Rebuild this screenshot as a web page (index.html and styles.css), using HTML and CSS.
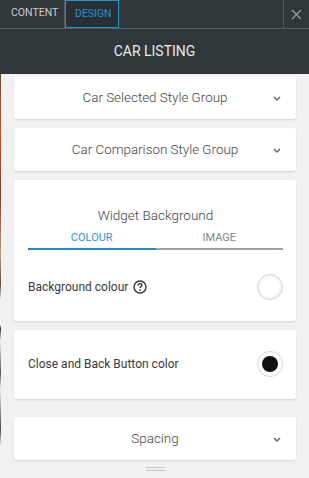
FILE: index.html
```html
<!DOCTYPE html>
<html lang="en">

<head>
    <meta charset="UTF-8">
    <meta name="viewport" content="width=device-width, initial-scale=1.0">
    <title>Car Listing</title>
    <link rel="stylesheet" href="styles.css">
</head>

<body>
    <div class="panel">
        <nav class="topbar">
            <div class="tab">CONTENT</div>
            <div class="tab active">DESIGN</div>
            <div class="spacer"></div>
            <div class="close">
                <svg width="11" height="11" viewBox="0 0 11 11"><path d="M1 1L10 10M10 1L1 10" stroke="#9aa1a4" stroke-width="1.2" fill="none"/></svg>
            </div>
        </nav>
        <header class="title">CAR LISTING</header>

        <div class="body">
            <div class="edge"></div>
            <div class="content">
                <section class="card group">
                    <span>Car Selected Style Group</span>
                    <svg class="chev" width="8" height="5" viewBox="0 0 8 5"><path d="M1 1L4 4L7 1" stroke="#5b6468" stroke-width="1.4" fill="none"/></svg>
                </section>

                <section class="card group">
                    <span>Car Comparison Style Group</span>
                    <svg class="chev" width="8" height="5" viewBox="0 0 8 5"><path d="M1 1L4 4L7 1" stroke="#5b6468" stroke-width="1.4" fill="none"/></svg>
                </section>

                <section class="card widget">
                    <h3>Widget Background</h3>
                    <ul class="subtabs">
                        <li class="current">COLOUR</li>
                        <li>IMAGE</li>
                    </ul>
                    <div class="row">
                        <span class="label">Background colour
                            <svg class="help" width="14" height="14" viewBox="0 0 14 14">
                                <circle cx="7" cy="7" r="6" stroke="#333" stroke-width="1.4" fill="none"/>
                                <path d="M5.1 5.4C5.1 4.3 5.9 3.6 7 3.6C8.1 3.6 8.9 4.3 8.9 5.2C8.9 6.4 7.2 6.5 7.2 8" stroke="#333" stroke-width="1.4" fill="none"/>
                                <circle cx="7.2" cy="10.1" r="0.9" fill="#333"/>
                            </svg>
                        </span>
                        <span class="swatch white"></span>
                    </div>
                </section>

                <section class="card single">
                    <div class="row">
                        <span class="label">Close and Back Button color</span>
                        <span class="swatch black"></span>
                    </div>
                </section>

                <section class="card group spacing">
                    <span>Spacing</span>
                    <svg class="chev" width="8" height="5" viewBox="0 0 8 5"><path d="M1 1L4 4L7 1" stroke="#5b6468" stroke-width="1.4" fill="none"/></svg>
                </section>

                <div class="handle"></div>
            </div>
        </div>
    </div>
</body>

</html>
```

FILE: styles.css
```css
* {
    margin: 0;
    padding: 0;
    box-sizing: border-box;
}

body {
    width: 309px;
    height: 478px;
    overflow: hidden;
    font-family: Roboto, "Liberation Sans", sans-serif;
    background: #f1f1f1;
}

.panel {
    display: flex;
    flex-direction: column;
    height: 478px;
}

.topbar {
    display: flex;
    height: 29px;
    background: #30373a;
    border-bottom: 1px solid #50585c;
}

.tab {
    height: 28px;
    line-height: 26px;
    padding: 0 11px;
    font-size: 10.5px;
    color: #c9cdcf;
    border-right: 1px solid #50585c;
}

.tab:first-child {
    width: 65px;
}

.tab.active {
    width: 54px;
    padding: 0 9px;
    color: #1e94cf;
    border: 1px solid #1e94cf;
    background: #2a3033;
}

.spacer {
    flex: 1;
}

.close {
    width: 26px;
    height: 28px;
    border-left: 1px solid #50585c;
    display: flex;
    align-items: center;
    justify-content: center;
}

.title {
    height: 45px;
    line-height: 44px;
    text-align: center;
    font-size: 14px;
    color: #e8eaeb;
    background: #30373a;
}

.body {
    flex: 1;
    display: flex;
    min-height: 0;
}

.edge {
    width: 1px;
    background: linear-gradient(#6b4a36 0%, #c2512e 15%, #8a3a2a 30%, #b89a7a 45%, #5c4a3e 52%, #f1f1f1 56%, #f1f1f1 62%, #333 63%, #f1f1f1 66%, #555 74%, #f1f1f1 78%, #444 88%, #f1f1f1 92%);
}

.content {
    flex: 1;
    display: flex;
    flex-direction: column;
    padding: 2px 13px 0 13px;
}

.card {
    background: #fff;
    border-radius: 3px;
    box-shadow: 0 1px 2px rgba(0, 0, 0, 0.12);
    margin-bottom: 9px;
}

.group {
    height: 43px;
    display: flex;
    align-items: center;
    justify-content: center;
    position: relative;
    font-size: 13.4px;
    font-weight: 300;
    color: #444;
}

.chev {
    position: absolute;
    right: 15px;
    top: 20px;
}

.widget {
    height: 141px;
    padding: 25px 13px 0 14px;
}

.widget h3 {
    font-size: 13.5px;
    font-weight: 300;
    color: #444;
    text-align: center;
    line-height: 20px;
}

.subtabs {
    list-style: none;
    display: flex;
    margin-top: 6px;
}

.subtabs li {
    flex: 1;
    text-align: center;
    font-size: 11px;
    line-height: 14px;
    color: #7c878c;
    padding-bottom: 3px;
    border-bottom: 2px solid #9ba3a7;
}

.subtabs li.current {
    color: #2a9bd3;
    border-bottom-color: #1e8ccc;
}

.row {
    display: flex;
    align-items: center;
    justify-content: space-between;
    height: 26px;
}

.widget .row {
    margin-top: 24px;
}

.label {
    display: flex;
    align-items: center;
    font-size: 12px;
    color: #3a3a3a;
}

.help {
    margin-left: 5px;
}

.swatch {
    width: 26px;
    height: 26px;
    border-radius: 50%;
    border: 1px solid #cfd6d9;
    background: #fff;
    position: relative;
}

.swatch.white {
    background: radial-gradient(circle, #fff 55%, #f3f5f6 60%);
}

.swatch.black::after {
    content: "";
    position: absolute;
    left: 4px;
    top: 4px;
    width: 16px;
    height: 16px;
    border-radius: 50%;
    background: #111;
}

.single {
    height: 69px;
    padding: 21px 13px 0 14px;
}

.spacing {
    margin-top: 9px;
}

.handle {
    width: 19px;
    height: 4px;
    margin: -2px auto 0;
    border-top: 1px solid #c8c8c8;
    border-bottom: 1px solid #c8c8c8;
}
```
